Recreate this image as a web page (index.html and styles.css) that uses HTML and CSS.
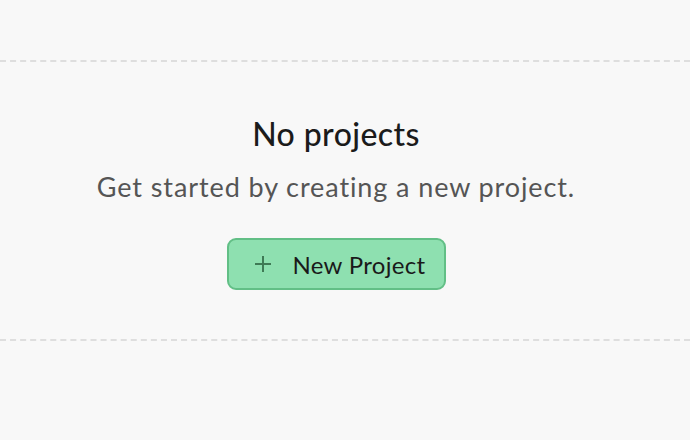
FILE: index.html
```html
<!DOCTYPE html>
<html>
<head>
<meta charset="utf-8">
<link rel="stylesheet" href="styles.css">
</head>
<body>
<main class="page">
  <section class="empty">
    <h2 class="empty-title">No projects</h2>
    <p class="empty-text">Get started by creating a new project.</p>
    <button class="btn-new" type="button">
      <svg class="btn-icon" width="18" height="18" viewBox="0 0 18 18" aria-hidden="true">
        <path d="M9 1v16M1 9h16" stroke="#3f7a55" stroke-width="2" fill="none"/>
      </svg>
      <span>New Project</span>
    </button>
  </section>
</main>
</body>
</html>
```
FILE: styles.css
```css
html, body {
  margin: 0;
  padding: 0;
  background: #f8f8f8;
  height: 100%;
}
body {
  font-family: Lato, "Noto Sans", sans-serif;
}
.page {
  padding-top: 60px;
}
.empty {
  border-top: 2px dashed #dedede;
  border-bottom: 2px dashed #dedede;
  height: 281px;
  box-sizing: border-box;
  display: flex;
  flex-direction: column;
  align-items: center;
  padding: 52px 18px 0 0;
}
.empty-title {
  margin: 0;
  font-size: 32px;
  font-weight: 500;
  letter-spacing: 0.4px;
  color: #1b1b1b;
  line-height: 40px;
}
.empty-text {
  margin: 17px 0 0;
  font-size: 27px;
  letter-spacing: 0.9px;
  color: #555;
  line-height: 32px;
}
.btn-new {
  margin-top: 35px;
  width: 219px;
  height: 52px;
  display: flex;
  align-items: center;
  gap: 21px;
  padding: 0 0 0 25px;
  box-sizing: border-box;
  background: #8ee0b0;
  border: 2px solid #62bf86;
  border-radius: 9px;
  font-family: inherit;
  font-size: 24px;
  letter-spacing: 0.3px;
  color: #1a1a1a;
}
.btn-icon {
  flex: none;
}
```
